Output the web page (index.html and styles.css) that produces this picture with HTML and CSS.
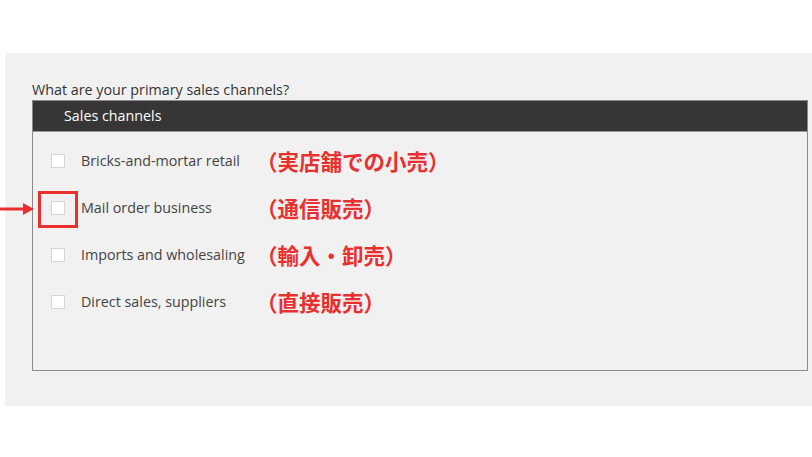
FILE: index.html
```html
<!DOCTYPE html>
<html>
<head>
<meta charset="utf-8">
<link rel="stylesheet" href="styles.css">
</head>
<body>
<div class="panel">
  <div class="question">What are your primary sales channels?</div>
  <div class="box">
    <div class="box-head">Sales channels</div>
    <div class="rows">
      <div class="row"><span class="cb"></span><span class="label">Bricks-and-mortar retail</span><span class="jp">（実店舗での小売）</span></div>
      <div class="row"><span class="cb"></span><span class="label">Mail order business</span><span class="jp">（通信販売）</span></div>
      <div class="row"><span class="cb"></span><span class="label">Imports and wholesaling</span><span class="jp">（輸入・卸売）</span></div>
      <div class="row"><span class="cb"></span><span class="label">Direct sales, suppliers</span><span class="jp">（直接販売）</span></div>
    </div>
  </div>
</div>
<div class="highlight"></div>
<svg class="arrow" width="40" height="14" viewBox="0 0 40 14">
  <line x1="0" y1="7" x2="26" y2="7" stroke="#e9302e" stroke-width="3"/>
  <polygon points="23,1 34,7 23,13" fill="#e9302e"/>
</svg>
</body>
</html>
```
FILE: styles.css
```css
html, body {
  margin: 0;
  padding: 0;
  background: #ffffff;
  width: 812px;
  height: 457px;
  overflow: hidden;
  position: relative;
  font-family: "Open Sans", "Liberation Sans", sans-serif;
}
.panel {
  margin: 53px 0 0 5px;
  height: 353px;
  background: #f1f1f1;
  padding: 27px 4px 0 27px;
  box-sizing: border-box;
}
.question {
  font-size: 14.3px;
  line-height: 20px;
  color: #333333;
}
.box {
  border: 1px solid #8a8a8a;
  height: 271px;
  box-sizing: border-box;
  background: #f1f1f1;
}
.box-head {
  height: 30px;
  background: #363636;
  color: #ffffff;
  font-size: 14.3px;
  line-height: 30px;
  padding-left: 31px;
  border-bottom: 1px solid #9a9a9a;
}
.rows {
  padding-top: 5px;
  display: flex;
  flex-direction: column;
}
.row {
  height: 47px;
  display: flex;
  align-items: center;
  padding-left: 18px;
}
.cb {
  width: 12px;
  height: 12px;
  background: #ffffff;
  border: 1px solid #d6d6d6;
  flex: none;
}
.label {
  margin-left: 16px;
  width: 175px;
  font-size: 14.3px;
  color: #444444;
  flex: none;
}
.jp {
  font-family: "Noto Sans CJK JP", sans-serif;
  font-weight: 700;
  font-size: 21.5px;
  color: #e9302e;
}
.highlight {
  position: absolute;
  left: 38px;
  top: 191px;
  width: 40px;
  height: 37px;
  border: 3px solid #e9302e;
  box-sizing: border-box;
}
.arrow {
  position: absolute;
  left: 0;
  top: 202px;
}
```
